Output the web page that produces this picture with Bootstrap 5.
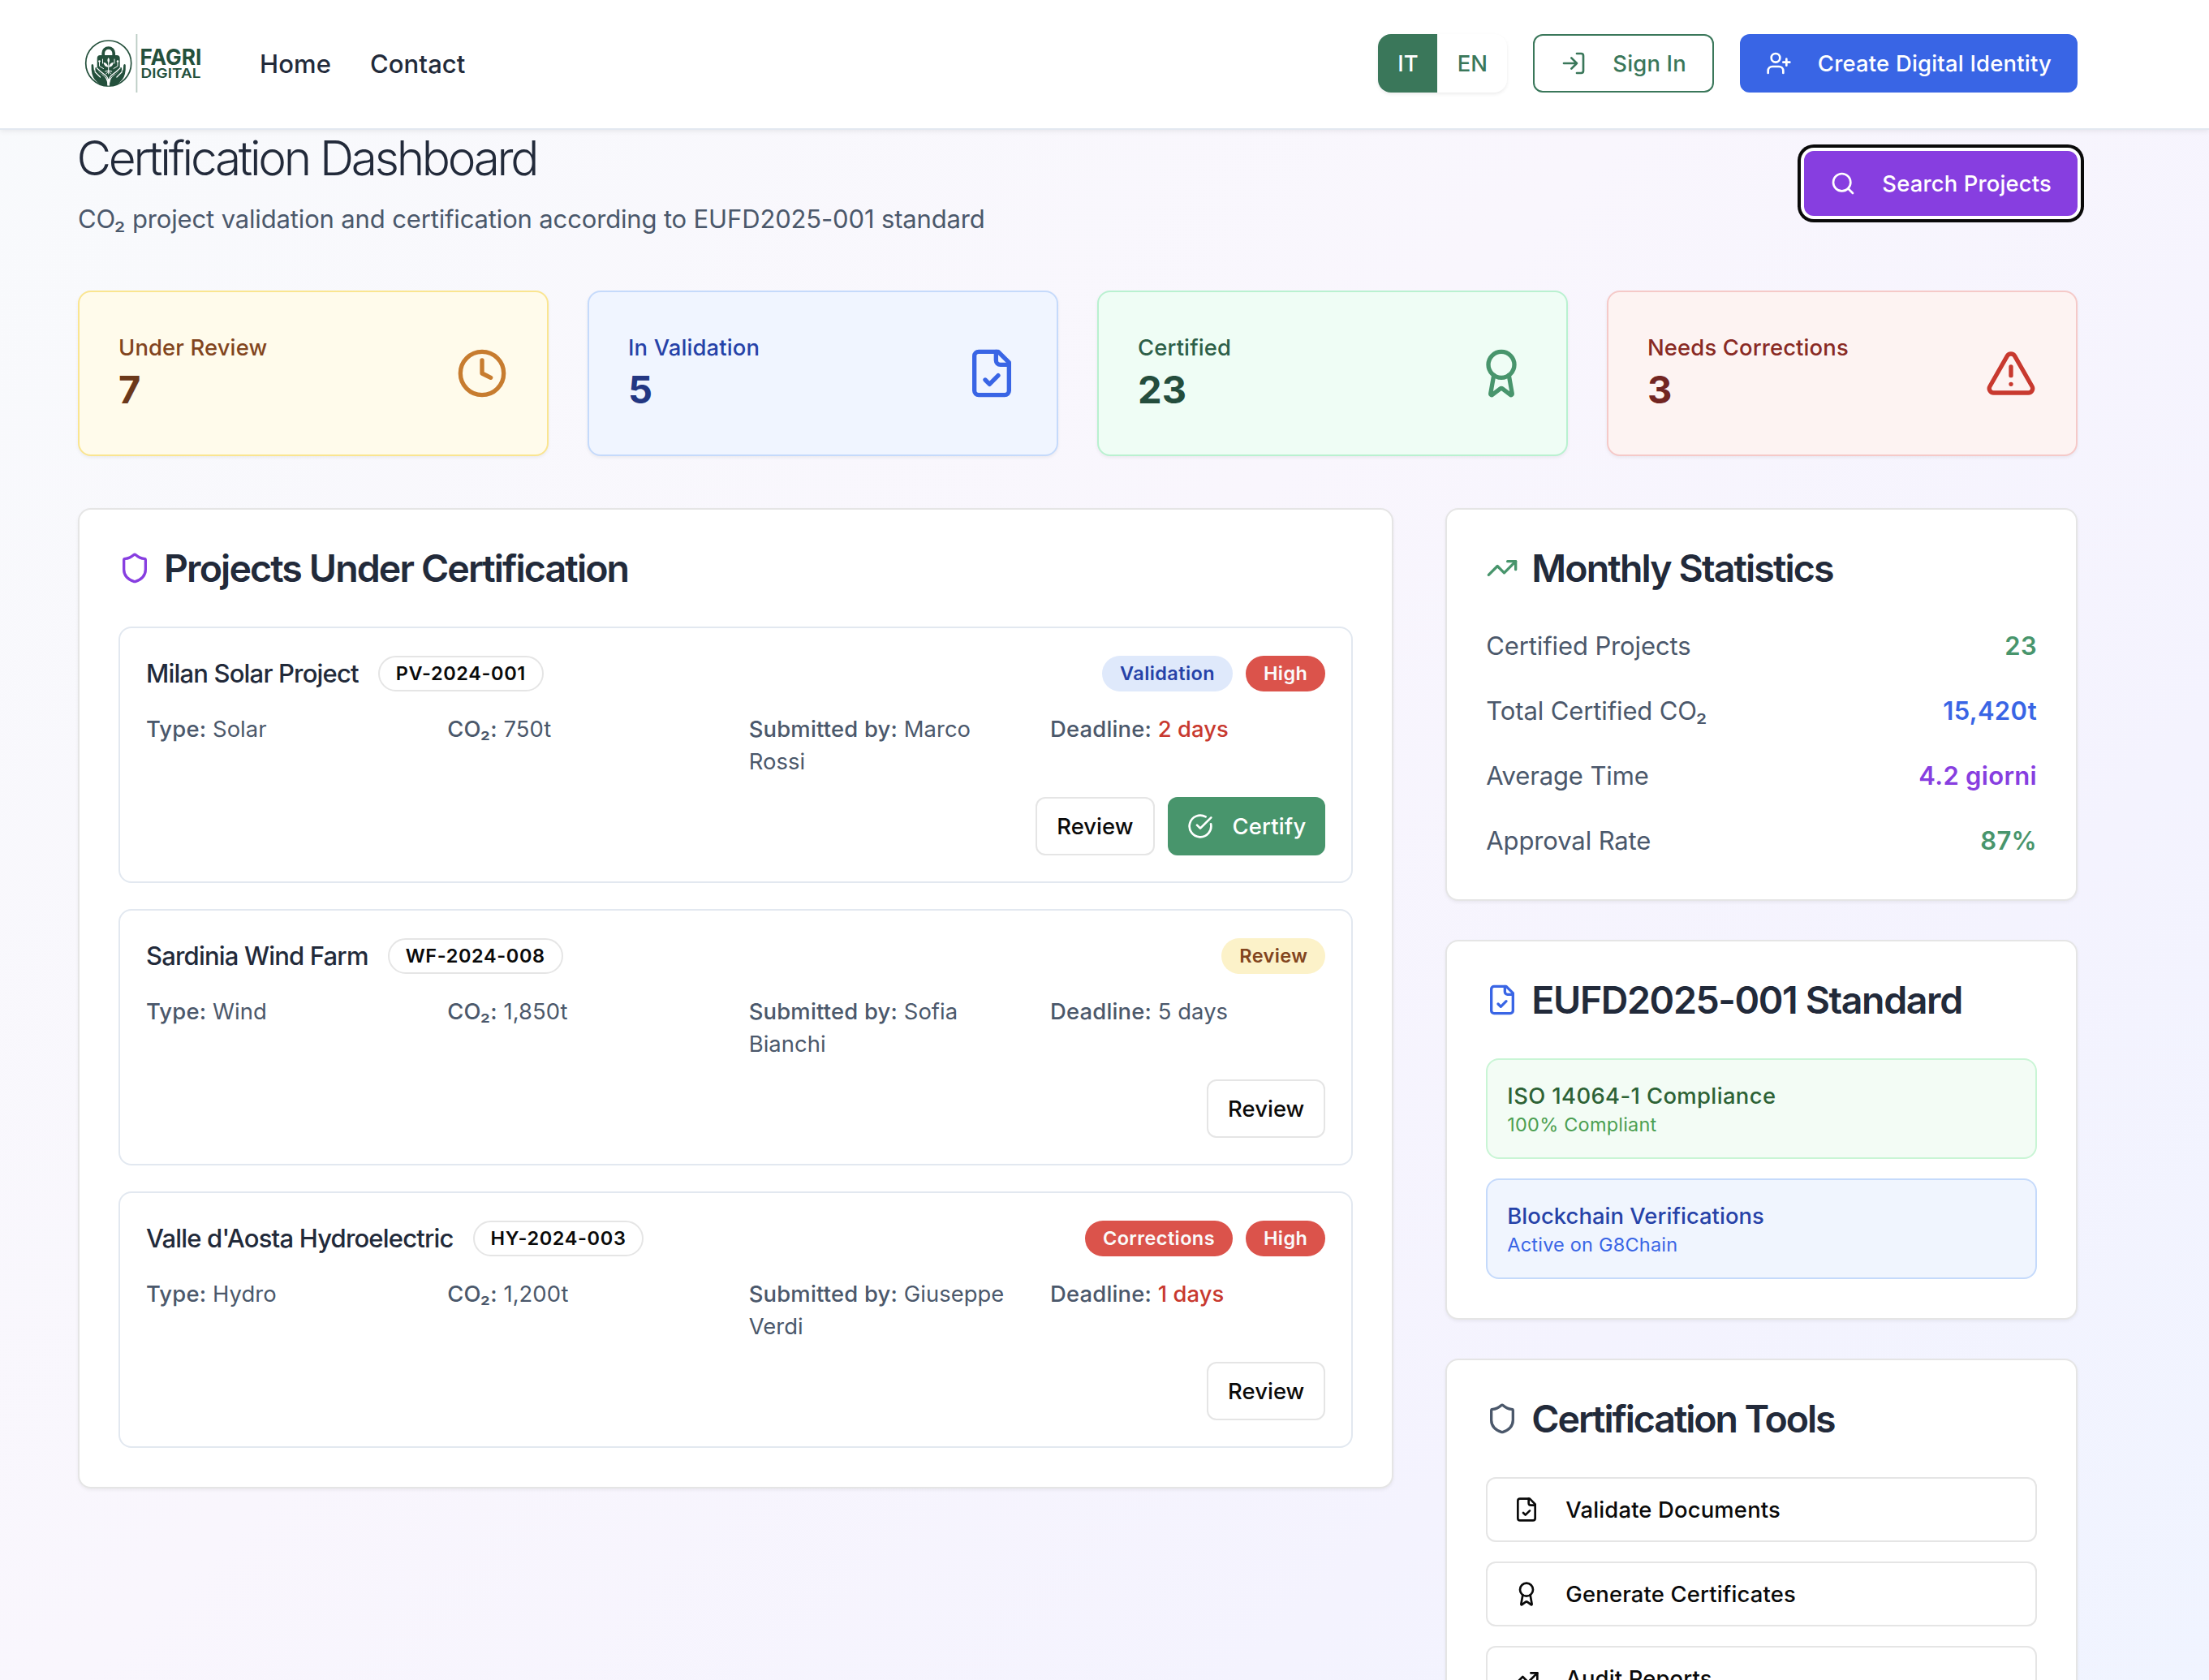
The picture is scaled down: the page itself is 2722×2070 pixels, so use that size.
<!DOCTYPE html>
<html lang="en">
<head>
<meta charset="utf-8">
<meta name="viewport" content="width=device-width, initial-scale=1">
<title>Certification Dashboard</title>
<link href="https://cdn.jsdelivr.net/npm/bootstrap@5.3.0/dist/css/bootstrap.min.css" rel="stylesheet">
<style>
:root{--ink:#222a3a;--slate:#4b586b;--green:#48956c;--forest:#3a775a;--blue:#3965e5;--violet:#873ee0;--red:#c8392f;--navy:#2642a8;--line:#e5e5e5}
html,body{height:2070px;overflow:hidden}
body{font-family:Inter,"Liberation Sans",sans-serif;font-size:27.4px;line-height:40px;letter-spacing:.05px;color:var(--ink);background:linear-gradient(135deg,#f8fafc 0%,#f9f6fd 43%,#f4f3fe 72%,#eff4ff 100%) 0 0/2722px 2300px no-repeat #eff4ff}
h1,h2,h3,p{margin:0}
svg.ic{width:32px;height:32px;flex:none;fill:none;stroke:currentColor;stroke-width:2;stroke-linecap:round;stroke-linejoin:round}
svg.ic-md{width:40px;height:40px}
svg.ic-lg{width:64px;height:64px}
.site-head{height:160px;background:#fff;border-bottom:2px solid #e2e8f0;box-shadow:0 2px 6px rgba(0,0,0,.07);padding:42px 162px 44px 96px;position:relative;z-index:2}
.logo{width:160px;height:72px}
.logo text{font-family:Inter,sans-serif;fill:#24503c}
.main-nav{margin-left:64px;gap:48px}
.main-nav .nav-link{padding:0;font-size:31px;font-weight:500;color:var(--ink);line-height:73px;letter-spacing:.1px}
.act{gap:32px}
.btn{--bs-btn-border-radius:12px;--bs-btn-font-size:27.4px;--bs-btn-font-weight:500;--bs-btn-line-height:40px;--bs-btn-border-width:2px;display:inline-flex;align-items:center;gap:32px;height:72px;padding:0 30px;white-space:nowrap;letter-spacing:.17px}
.btn-forest{border-color:var(--forest);color:var(--forest);background:#fff;padding:0 32px}
.btn-blue{border-color:var(--blue);background:var(--blue);color:#fff;letter-spacing:.22px}
.btn-violet{border-color:var(--violet);background:var(--violet);color:#fff;height:80px;margin-top:21px;box-shadow:0 0 0 4px #fff,0 0 0 8px #0a0a0a}
.btn-line{border-color:var(--line);background:#fff;color:#0a0a0a;padding:0 24px;letter-spacing:.05px}
.btn-go{border-color:var(--green);background:var(--green);color:#fff;padding:0 22px;gap:24px}
.btn-tool{border-color:var(--line);background:#fff;color:#0a0a0a;height:80px;padding:0 32px}
.lang{border-radius:16px;overflow:hidden;box-shadow:0 2px 4px rgba(0,0,0,.08);height:72px;font-weight:500;line-height:72px;color:var(--forest)}
.lang span{padding:0 24px;width:86px;text-align:center}
.lang .on{background:var(--forest);color:#fff;width:73px}
.page{padding:5px 162px 0 96px}
.page-title{font-size:58.5px;font-weight:300;line-height:60px;letter-spacing:-.056em;margin-left:-1.5px}
.page-sub{font-size:31px;line-height:48px;margin-top:21px;color:var(--slate);letter-spacing:-.15px}
.stats{display:grid;grid-template-columns:repeat(4,1fr);gap:48px;margin-top:64px}
.stat{height:204px;border:2px solid;border-radius:16px;padding:0 48px;box-shadow:0 2px 4px rgba(0,0,0,.06)}
.stat .lbl{font-weight:500;letter-spacing:.14px}
.stat .num{font-size:47px;font-weight:700;line-height:64px}
.st-y{background:#fffbeb;border-color:#fae590;color:#c77c2f}.st-y .lbl{color:#82451e}.st-y .num{color:#6b381a}
.st-b{background:#f0f5ff;border-color:#c5dafb;color:var(--blue)}.st-b .lbl{color:var(--navy)}.st-b .num{color:#233782}
.st-g{background:#effdf5;border-color:#b9f1d0;color:var(--green)}.st-g .lbl{color:#2d5f48}.st-g .num{color:#244d3c}
.st-r{background:#fdf3f2;border-color:#f5c9c8;color:var(--red)}.st-r .lbl{color:#892a24}.st-r .num{color:#722522}
.cols{display:grid;grid-template-columns:1621.33px 778.67px;gap:64px;margin-top:64px;align-items:start}
.panel{background:#fff;border:2px solid var(--line);border-radius:16px;padding:48px;box-shadow:0 2px 4px rgba(0,0,0,.06)}
.panel h2{font-size:46.5px;font-weight:600;line-height:48px;letter-spacing:-.0405em;white-space:nowrap}
.panel h2.h-std{letter-spacing:-.03em}
.panel h2.h-tools{letter-spacing:-.045em}
.panel-top{gap:16px;margin-bottom:48px;height:48px}
.side{gap:48px}
.proj{border:2px solid #e2e8f0;border-radius:16px;padding:32px;height:316px}
.proj h3{font-size:31px;font-weight:500;line-height:48px;letter-spacing:-.0265em}
.pill{display:inline-flex;align-items:center;height:44px;border-radius:22px;border:2px solid transparent;padding:0 20px;font-size:23.5px;font-weight:600;line-height:32px;letter-spacing:.4px}
.pill-id{border-color:var(--line);color:#0a0a0a;margin-left:24px;letter-spacing:.63px}
.pill-val{background:#dfe9fb;color:var(--navy)}
.pill-hot{background:#db534b;color:#fafafa}
.pill-rev{background:#fcf2c9;color:#82451e}
.facts{display:grid;grid-template-columns:repeat(4,1fr);gap:32px;margin:24px 0;height:80px;color:var(--slate)}
.facts b{font-weight:500;letter-spacing:.2px}
.late{color:var(--red);font-weight:500}
.kv{font-size:31px;line-height:48px;gap:32px;color:var(--slate);letter-spacing:-.12px}
.kv b{font-weight:600;letter-spacing:.3px}
.note{border:2px solid;border-radius:16px;padding:24px}
.note small{font-size:23.5px;line-height:32px;display:block;letter-spacing:.2px}
.note b{font-weight:500;display:block}
.note-g{background:#f3fcf5;border-color:#c9f5d5;color:#4c9f52}.note-g b{color:#2d6235;letter-spacing:.38px}
.note-b{background:#f0f5fe;border-color:#c5dafb;color:var(--blue)}.note-b b{color:var(--navy)}
</style>
</head>
<body>
<svg class="d-none">
  <symbol id="shield" viewBox="0 0 24 24"><path d="M20 13c0 5-3.5 7.5-7.66 8.95a1 1 0 0 1-.67-.01C7.5 20.5 4 18 4 13V6a1 1 0 0 1 1-1c2 0 4.5-1.2 6.24-2.72a1.17 1.17 0 0 1 1.52 0C14.51 3.81 17 5 19 5a1 1 0 0 1 1 1z"/></symbol>
  <symbol id="file" viewBox="0 0 24 24"><path d="M15 2H6a2 2 0 0 0-2 2v16a2 2 0 0 0 2 2h12a2 2 0 0 0 2-2V7Z"/><path d="M14 2v4a2 2 0 0 0 2 2h4"/><path d="m9 15 2 2 4-4"/></symbol>
  <symbol id="award" viewBox="0 0 24 24"><path d="m15.477 12.89 1.515 8.526a.5.5 0 0 1-.81.47l-3.58-2.687a1 1 0 0 0-1.197 0l-3.586 2.686a.5.5 0 0 1-.81-.469l1.514-8.526"/><circle cx="12" cy="8" r="6"/></symbol>
  <symbol id="trend" viewBox="0 0 24 24"><path d="M22 7l-8.5 8.5-5-5L2 17"/><path d="M16 7h6v6"/></symbol>
</svg>

<header class="site-head d-flex align-items-center">
  <svg class="logo" viewBox="96 42 160 72">
    <circle cx="133.7" cy="78" r="28" fill="#fff" stroke="#24503c" stroke-width="1.7"/>
    <path d="M127.200 70v-4.500a6.500 6.500 0 0 1 13 0V70" fill="none" stroke="#24503c" stroke-width="3.700"/>
    <path d="M123.500 68h20.400q3.800 0 3.800 4v12.500q-1.500 5.500-7 7.500-4.500 3-7 8-2.500-5-7-8-5.500-2-7-7.500V72q0-4 3.800-4z" fill="#24503c"/>
    <path id="palm" d="M112.600 80.500q0-1.600 1.200-1.600t1.400 1.600l.6 6 2.200 1.800q-1-3-.6-4.500 1-1.600 2.400.4l2.200 4.800 6.500 5.200q4 3.600 4.200 12.300-9.500-.5-16-8.500-4.600-6-4.100-17.500z" fill="#24503c"/>
    <path d="M154.800 80.500q0-1.600-1.200-1.600t-1.400 1.600l-.6 6-2.200 1.800q1-3 .6-4.500-1-1.600-2.400.4l-2.200 4.800-6.500 5.200q-4 3.600-4.200 12.300 9.500-.5 16-8.500 4.600-6 4.100-17.500z" fill="#24503c"/>
    <g fill="none" stroke="#fff" stroke-width="1" stroke-linecap="round" stroke-linejoin="round">
      <path d="M133.700 76v15M133.700 87l-4 1M133.700 87l4 1M133.700 88l-3 3M133.700 88l3 3"/>
      <path d="M122.500 76v5.500l5 3M145 76v5.500l-5 3M126.500 73v5M141 73v5"/>
      <path d="M119.500 84q5 5 9.500 8t4.700 9q.3-6 4.700-9t9.500-8M117 88.500l6.500 6.500M150.400 88.500l-6.500 6.500" stroke-width="1.200"/>
    </g>
    <g fill="#fff"><path d="M133.700 71q-2.600 3.200 0 6.800q2.600-3.600 0-6.800zM127.500 77q4.500 0 6 5.800-5.200-.3-6-5.800zM139.900 77q-4.500 0-6 5.800 5.200-.3 6-5.800z"/><circle cx="122.500" cy="75.500" r="1.300"/><circle cx="145" cy="75.500" r="1.300"/><path d="M132.300 105.500q.2-4-.8-7.500h4.400q-1 3.500-.8 7.500z"/></g>
    <path d="M168.400 42v72" stroke="#b9cbc3" stroke-width="1.800"/>
    <text x="172.500" y="80.300" font-size="27.500" font-weight="700" textLength="76" lengthAdjust="spacingAndGlyphs">FAGRI</text>
    <text x="173.500" y="95.800" font-size="16.200" font-weight="600" textLength="74" lengthAdjust="spacingAndGlyphs">DIGITAL</text>
  </svg>
  <nav class="main-nav nav flex-nowrap">
    <a class="nav-link" href="#">Home</a>
    <a class="nav-link" href="#">Contact</a>
  </nav>
  <div class="act d-flex align-items-center ms-auto">
    <div class="lang d-flex"><span class="on">IT</span><span>EN</span></div>
    <a class="btn btn-forest" href="#"><svg class="ic" viewBox="0 0 24 24"><path d="M15 3h4a2 2 0 0 1 2 2v14a2 2 0 0 1-2 2h-4M10 17l5-5-5-5M15 12H3"/></svg><span>Sign In</span></a>
    <a class="btn btn-blue" href="#"><svg class="ic" viewBox="0 0 24 24"><path d="M16 21v-2a4 4 0 0 0-4-4H6a4 4 0 0 0-4 4v2M19 8v6M22 11h-6"/><circle cx="9" cy="7" r="4"/></svg><span>Create Digital Identity</span></a>
  </div>
</header>

<main class="page">
  <div class="d-flex justify-content-between align-items-start">
    <div>
      <h1 class="page-title">Certification Dashboard</h1>
      <p class="page-sub">CO₂ project validation and certification according to EUFD2025-001 standard</p>
    </div>
    <button class="btn btn-violet"><svg class="ic" viewBox="0 0 24 24"><circle cx="11" cy="11" r="8"/><path d="m21 21-4.300-4.300"/></svg><span>Search Projects</span></button>
  </div>

  <section class="stats">
    <div class="stat st-y d-flex align-items-center justify-content-between"><div><p class="lbl">Under Review</p><p class="num">7</p></div><svg class="ic ic-lg" viewBox="0 0 24 24"><circle cx="12" cy="12" r="10"/><path d="M12 6v6l4 2"/></svg></div>
    <div class="stat st-b d-flex align-items-center justify-content-between"><div><p class="lbl">In Validation</p><p class="num">5</p></div><svg class="ic ic-lg"><use href="#file"/></svg></div>
    <div class="stat st-g d-flex align-items-center justify-content-between"><div><p class="lbl">Certified</p><p class="num">23</p></div><svg class="ic ic-lg"><use href="#award"/></svg></div>
    <div class="stat st-r d-flex align-items-center justify-content-between"><div><p class="lbl">Needs Corrections</p><p class="num">3</p></div><svg class="ic ic-lg" viewBox="0 0 24 24"><path d="m21.730 18-8-14a2 2 0 0 0-3.480 0l-8 14A2 2 0 0 0 4 21h16a2 2 0 0 0 1.730-3M12 9v4M12 17h.01"/></svg></div>
  </section>

  <div class="cols">
    <section class="panel">
      <div class="panel-top d-flex align-items-center"><svg class="ic ic-md" style="color:var(--violet)"><use href="#shield"/></svg><h2>Projects Under Certification</h2></div>
      <div class="d-flex flex-column" style="gap:32px">
        <article class="proj">
          <div class="d-flex align-items-center"><h3>Milan Solar Project</h3><span class="pill pill-id">PV-2024-001</span><div class="d-flex gap-3 ms-auto"><span class="pill pill-val">Validation</span><span class="pill pill-hot">High</span></div></div>
          <div class="facts"><div><b>Type:</b> Solar</div><div><b>CO₂:</b> 750t</div><div><b>Submitted by:</b> Marco Rossi</div><div><b>Deadline:</b> <span class="late">2 days</span></div></div>
          <div class="d-flex justify-content-end gap-3"><button class="btn btn-line">Review</button><button class="btn btn-go"><svg class="ic" viewBox="0 0 24 24"><path d="M21.801 10A10 10 0 1 1 17 3.335M9 11l3 3L22 4"/></svg><span>Certify</span></button></div>
        </article>
        <article class="proj">
          <div class="d-flex align-items-center"><h3>Sardinia Wind Farm</h3><span class="pill pill-id">WF-2024-008</span><div class="d-flex gap-3 ms-auto"><span class="pill pill-rev">Review</span></div></div>
          <div class="facts"><div><b>Type:</b> Wind</div><div><b>CO₂:</b> 1,850t</div><div><b>Submitted by:</b> Sofia Bianchi</div><div><b>Deadline:</b> 5 days</div></div>
          <div class="d-flex justify-content-end gap-3"><button class="btn btn-line">Review</button></div>
        </article>
        <article class="proj">
          <div class="d-flex align-items-center"><h3>Valle d'Aosta Hydroelectric</h3><span class="pill pill-id">HY-2024-003</span><div class="d-flex gap-3 ms-auto"><span class="pill pill-hot">Corrections</span><span class="pill pill-hot">High</span></div></div>
          <div class="facts"><div><b>Type:</b> Hydro</div><div><b>CO₂:</b> 1,200t</div><div><b>Submitted by:</b> Giuseppe Verdi</div><div><b>Deadline:</b> <span class="late">1 days</span></div></div>
          <div class="d-flex justify-content-end gap-3"><button class="btn btn-line">Review</button></div>
        </article>
      </div>
    </section>

    <aside class="side d-flex flex-column">
      <section class="panel">
        <div class="panel-top d-flex align-items-center"><svg class="ic ic-md" style="color:var(--green)"><use href="#trend"/></svg><h2>Monthly Statistics</h2></div>
        <div class="kv d-flex flex-column">
          <div class="d-flex justify-content-between"><span>Certified Projects</span><b style="color:var(--green)">23</b></div>
          <div class="d-flex justify-content-between"><span>Total Certified CO₂</span><b style="color:var(--blue)">15,420t</b></div>
          <div class="d-flex justify-content-between"><span>Average Time</span><b style="color:var(--violet)">4.2 giorni</b></div>
          <div class="d-flex justify-content-between"><span>Approval Rate</span><b style="color:var(--green)">87%</b></div>
        </div>
      </section>
      <section class="panel">
        <div class="panel-top d-flex align-items-center"><svg class="ic ic-md" style="color:var(--blue)"><use href="#file"/></svg><h2 class="h-std">EUFD2025-001 Standard</h2></div>
        <div class="d-flex flex-column gap-4">
          <div class="note note-g"><b>ISO 14064-1 Compliance</b><small>100% Compliant</small></div>
          <div class="note note-b"><b>Blockchain Verifications</b><small>Active on G8Chain</small></div>
        </div>
      </section>
      <section class="panel">
        <div class="panel-top d-flex align-items-center"><svg class="ic ic-md" style="color:var(--slate)"><use href="#shield"/></svg><h2 class="h-tools">Certification Tools</h2></div>
        <div class="d-flex flex-column gap-4">
          <button class="btn btn-tool"><svg class="ic"><use href="#file"/></svg><span>Validate Documents</span></button>
          <button class="btn btn-tool"><svg class="ic"><use href="#award"/></svg><span>Generate Certificates</span></button>
          <button class="btn btn-tool"><svg class="ic"><use href="#trend"/></svg><span>Audit Reports</span></button>
        </div>
      </section>
    </aside>
  </div>
</main>
<script src="https://cdn.jsdelivr.net/npm/bootstrap@5.3.0/dist/js/bootstrap.bundle.min.js"></script>
</body>
</html>
